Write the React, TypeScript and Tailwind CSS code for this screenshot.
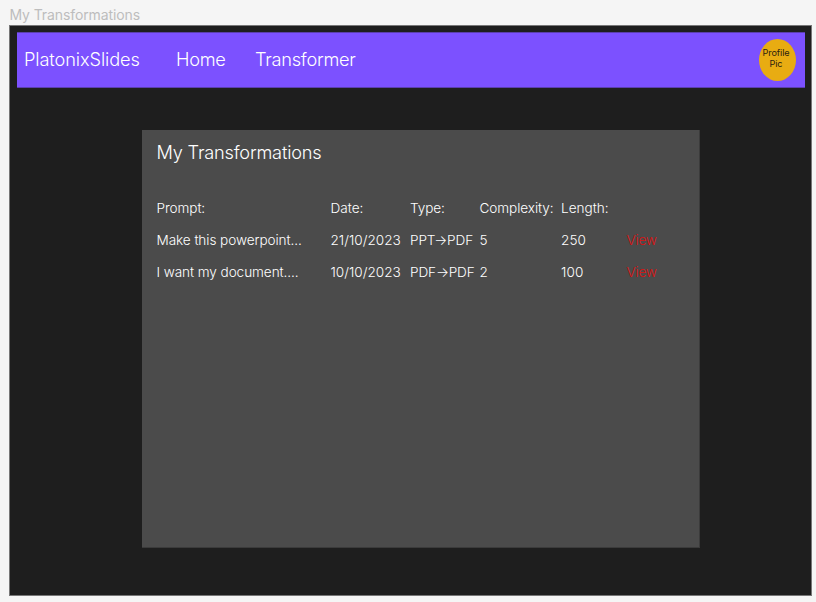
const rows = [
  { prompt: "Make this powerpoint...", date: "21/10/2023", type: "PPT→PDF", complexity: "5", length: "250" },
  { prompt: "I want my document....", date: "10/10/2023", type: "PDF→PDF", complexity: "2", length: "100" },
];

const columns = "grid grid-cols-[174px_79.5px_69.5px_81.5px_66px_auto] h-[32.2px] items-center whitespace-nowrap";

function NavBar() {
  return (
    <nav className="flex h-14 w-[788px] items-center border-y border-[#5b3fae] bg-[#7c51ff] pl-[7px] pr-[9px] text-[18.2px] tracking-[-0.1px] text-white">
      <span className="w-[152px]">PlatonixSlides</span>
      <span className="w-[79px] tracking-[-0.3px]">Home</span>
      <span className="tracking-[-0.26px]">Transformer</span>
      <div className="ml-auto flex h-[42px] w-[37px] justify-center rounded-[50%] bg-[#e8ac12] pt-[9px] text-center text-[9.1px] font-normal leading-[10.5px] tracking-[-0.1px] text-[#2b2110]">
        <span className="-ml-[3px]">
          Profile
          <br />
          Pic
        </span>
      </div>
    </nav>
  );
}

export default function App() {
  return (
    <div className="h-[602px] w-[816px] overflow-hidden bg-[#f5f5f5] pl-[9px] font-['Inter',sans-serif] font-light">
      <div className="h-[25px] pl-[0.5px] pt-[3.5px] text-[14px] font-normal leading-[21px] tracking-[-0.1px] text-[#bdbdbd]">My Transformations</div>
      <div className="h-[571px] w-[803px] border border-[#777777] bg-[#1e1e1e] pl-[7px] pt-[6px]">
        <NavBar />
        <main className="ml-[125px] mt-[42px] h-[418px] w-[558px] border-b border-r border-[#3b3b3b] bg-[#4b4b4b] pl-[14.5px] text-[13.6px] tracking-[-0.08px] text-white">
          <h1 className="h-[62px] pt-[10px] text-[18.2px] leading-6 tracking-[-0.2px]">My Transformations</h1>
          <div className={columns}>
            <span>Prompt:</span>
            <span className="tracking-normal">Date:</span>
            <span>Type:</span>
            <span>Complexity:</span>
            <span className="tracking-normal">Length:</span>
          </div>
          {rows.map((row) => (
            <div key={row.date} className={columns}>
              <span>{row.prompt}</span>
              <span className="tracking-normal">{row.date}</span>
              <span className="tracking-[-0.14px]">{row.type}</span>
              <span>{row.complexity}</span>
              <span className="tracking-[0.1px]">{row.length}</span>
              <a className="-ml-[0.5px] tracking-[-0.2px] text-[#dc1212]">View</a>
            </div>
          ))}
        </main>
      </div>
    </div>
  );
}
